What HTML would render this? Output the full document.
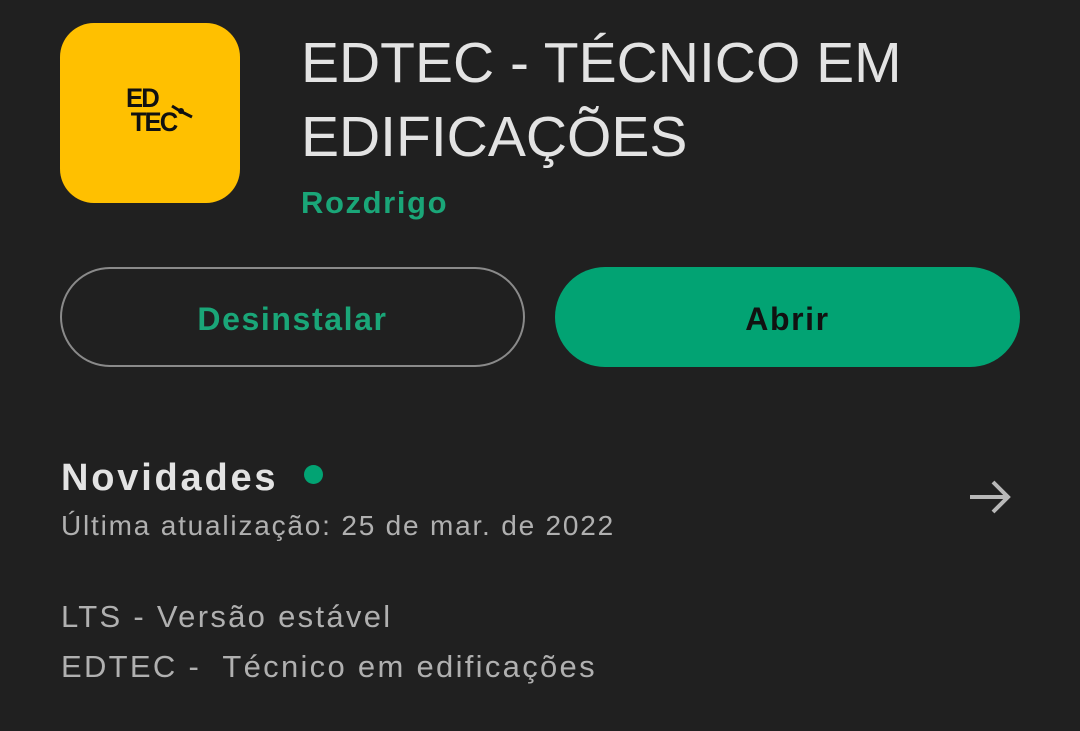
<!DOCTYPE html>
<html><head><style>
body{margin:0;width:1080px;height:731px;background:#202020;font-family:"Liberation Sans",sans-serif;position:relative;overflow:hidden}
div{position:absolute;white-space:nowrap}
</style></head><body>
<div style="left:60px;top:23px;width:180px;height:180px;background:#FFC000;border-radius:34px"></div>
<div style="left:126px;top:86px;font-weight:bold;font-size:27px;line-height:24px;color:#111;letter-spacing:-2px;transform:scaleX(0.95);transform-origin:left">ED<br><span style="margin-left:5px">TEC</span></div>
<svg style="position:absolute;left:170px;top:103px" width="26" height="18"><path d="M2 3 L10 8 L18 12 L22 14" stroke="#111" stroke-width="3" fill="none"/><circle cx="11" cy="8" r="3" fill="#111"/></svg>
<div style="left:301px;top:26px;font-size:57px;line-height:74px;color:#e3e3e3">EDTEC - TÉCNICO EM<br>EDIFICAÇÕES</div>
<div style="left:301px;top:185px;font-size:31px;color:#1aa678;font-weight:bold;letter-spacing:1.6px">Rozdrigo</div>
<div style="left:60px;top:267px;width:461px;height:96px;border:2px solid #8a8a8a;border-radius:50px;text-align:center;line-height:100px;font-size:32px;color:#1aa678;font-weight:bold;letter-spacing:1.6px">Desinstalar</div>
<div style="left:555px;top:267px;width:465px;height:100px;background:#02A373;border-radius:50px;text-align:center;line-height:104px;font-size:32px;color:#111;font-weight:bold;letter-spacing:1.6px">Abrir</div>
<div style="left:61px;top:457px;font-size:38px;color:#e3e3e3;font-weight:bold;letter-spacing:2.8px">Novidades</div>
<div style="left:304px;top:465px;width:19px;height:19px;border-radius:50%;background:#02A373"></div>
<div style="left:61px;top:510px;font-size:28px;color:#b0b0b0;letter-spacing:1.8px">Última atualização: 25 de mar. de 2022</div>
<svg style="position:absolute;left:965px;top:475px" width="50" height="45"><path d="M5 22 H43 M28 7 L43 22 L28 37" stroke="#b8b8b8" stroke-width="4" fill="none"/></svg>
<div style="left:61px;top:592px;font-size:31px;line-height:50px;color:#b0b0b0;letter-spacing:2.3px">LTS - Versão estável<br>EDTEC -&nbsp; Técnico em edificações</div>
</body></html>
